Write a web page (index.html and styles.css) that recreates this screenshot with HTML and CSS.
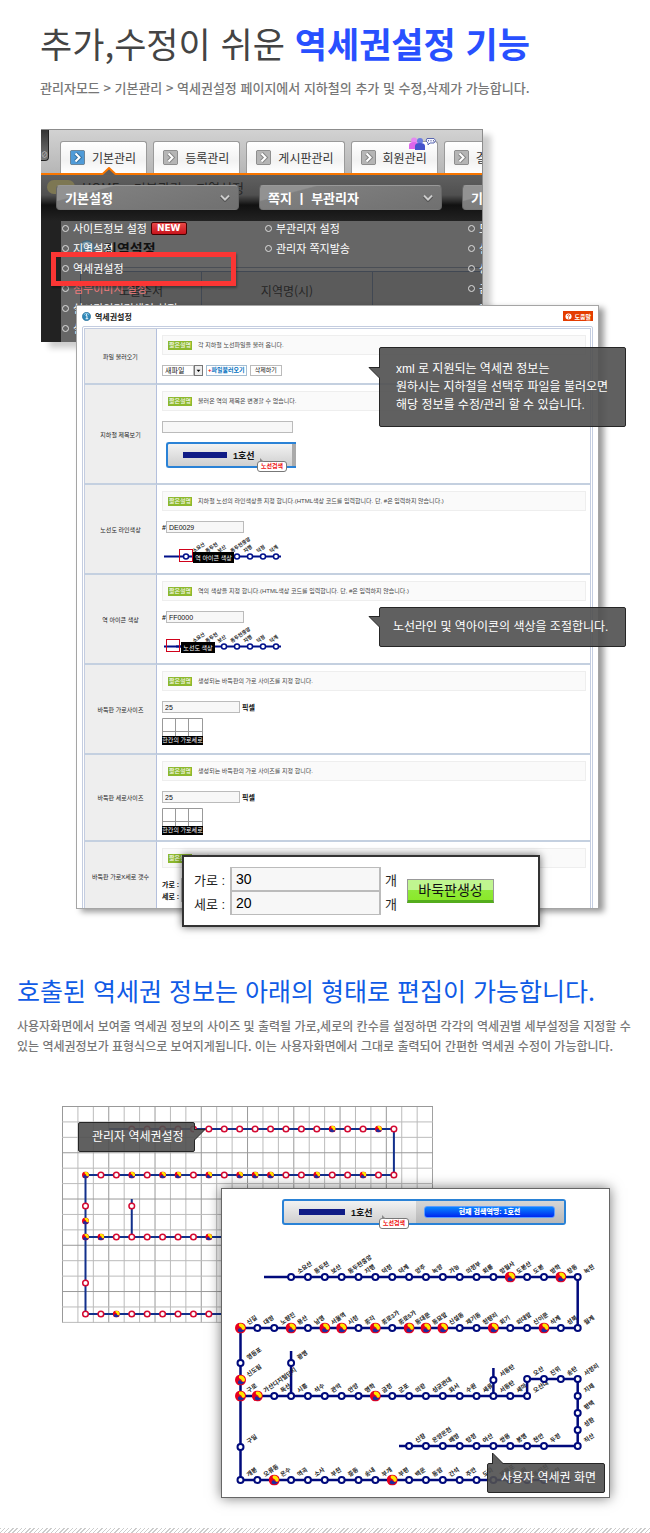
FILE: index.html
```html
<!DOCTYPE html>
<html lang="ko">
<head>
<meta charset="utf-8">
<meta name="viewport" content="width=device-width, initial-scale=1">
<title>역세권설정 기능</title>
<link rel="stylesheet" href="styles.css">
</head>
<body>
<svg class="defs" aria-hidden="true">
  <defs>
    <symbol id="swirl" viewBox="-5 -5 10 10">
      <circle r="5" fill="#e8001c"/>
      <path d="M-1 -4.6 A4.7 4.7 0 0 1 4.4 1.6 C2.6 2.6 1.2 1.6 1.2 0.2 C1.2 -1.4 -2.6 -1 -1 -4.6Z" fill="#ffe800"/>
      <path d="M4.4 1.6 A4.7 4.7 0 0 1 -3.6 3 C-3.4 0.8 -1.6 -0.4 -0.2 0.4 C1.2 1.4 1.6 3 4.4 1.6Z" fill="#1c2ca0"/>
    </symbol>
    <symbol id="transfer" viewBox="-5 -5 10 10">
      <circle r="5" fill="#e60020"/>
      <path d="M-1.2 -3.9 A4 4 0 0 1 3.9 1 C2.4 2 1.2 1.4 1.1 .2 C1 -1.2 -2.4 -.6 -1.2 -3.9Z" fill="#ffe800"/>
      <path d="M3.6 1.6 A3.9 3.9 0 0 1 -2.4 3 C-2.4 1 -1.4 0 -.2 .4 C1 1 1.4 2.4 3.6 1.6Z" fill="#1c2ca0"/>
    </symbol>
    <symbol id="tab-arrow" viewBox="0 0 15 15">
      <rect x=".5" y=".5" width="14" height="14" rx="1" fill="currentColor" stroke="#0005"/>
      <path d="M5.5 3.5 9.5 7.5 5.5 11.500" fill="none" stroke="#0004" stroke-width="4"/>
      <path d="M5.5 3.5 9.5 7.5 5.5 11.500" fill="none" stroke="#fff" stroke-width="2"/>
    </symbol>
    <symbol id="chevron" viewBox="0 0 10 8">
      <path d="M1 2 5 6 9 2" fill="none" stroke="#555" stroke-width="3.500"/>
      <path d="M1 1.500 5 5.500 9 1.500" fill="none" stroke="#ccc" stroke-width="2"/>
    </symbol>
    <symbol id="info" viewBox="0 0 10 10">
      <circle cx="5" cy="5" r="4.600" fill="#2d87b8" stroke="#1b6590" stroke-width=".6"/>
      <path d="M2 3 A4 4 0 0 1 8 3" fill="none" stroke="#9bd4ee"/>
      <path d="M4 4h1.500v3.500M4 7.500h3M5 2.300v1" fill="none" stroke="#fff"/>
    </symbol>
    <symbol id="grid-thumb" viewBox="0 0 41 18">
      <path d="M.5 18V.5H40.500V18M13.500 0V18M26.500 0V18M0 13.500H41" fill="none" stroke="#999"/>
    </symbol>
    <g id="thumb-labels" class="thumb-text">
      <text transform="translate(32 16) rotate(-35)">소요산</text>
      <text transform="translate(45 16) rotate(-35)">동두천</text>
      <text transform="translate(57 16) rotate(-35)">보산</text>
      <text transform="translate(70 16) rotate(-35)">동두천중앙</text>
      <text transform="translate(83 16) rotate(-35)">지행</text>
      <text transform="translate(96 16) rotate(-35)">덕정</text>
      <text transform="translate(109 16) rotate(-35)">덕계</text>
      <path d="M2 19.500H119" stroke="#00108a" stroke-width="2"/>
      <g fill="#fff" stroke="#00108a" stroke-width="1.500">
        <circle cx="24" cy="19.500" r="2.500"/><circle cx="49" cy="19.500" r="2.500"/><circle cx="62" cy="19.500" r="2.500"/><circle cx="75" cy="19.500" r="2.500"/><circle cx="88" cy="19.500" r="2.500"/><circle cx="101" cy="19.500" r="2.500"/><circle cx="114" cy="19.500" r="2.500"/>
      </g>
    </g>
  </defs>
</svg>

<main class="page">
  <header class="intro">
    <h1>추가,수정이 쉬운 <strong>역세권설정 기능</strong></h1>
    <p>관리자모드 &gt; 기본관리 &gt; 역세권설정 페이지에서 지하철의 추가 및 수정,삭제가 가능합니다.</p>
  </header>

  <section class="stage">
    <div class="admin">
      <nav class="tabs">
        <span class="corner">⊘</span>
        <a href="#" class="tab tab-on"><svg><use href="#tab-arrow"/></svg>기본관리</a>
        <a href="#" class="tab"><svg><use href="#tab-arrow"/></svg>등록관리</a>
        <a href="#" class="tab"><svg><use href="#tab-arrow"/></svg>게시판관리</a>
        <a href="#" class="tab"><svg><use href="#tab-arrow"/></svg>회원관리
          <svg class="people" viewBox="0 0 28 14">
            <circle cx="6" cy="3.500" r="3" fill="#e58af0"/><path d="M1 12V8Q1 5 6 5T11 8V12Z" fill="#dd66ea"/>
            <circle cx="12" cy="4" r="3" fill="#6a7ce0"/><path d="M7 13V9Q7 6 12 6T17 9V13Z" fill="#4553cc"/>
            <path d="M19 1.500H26L27.500 3.500 26 6H22L20 8V6L18 4Z" fill="#f4f6ff" stroke="#5966b0"/>
            <path d="M20 3.800h1M22.500 3.800h1M25 3.800h1" stroke="#333a80"/>
          </svg></a>
        <a href="#" class="tab"><svg><use href="#tab-arrow"/></svg>결제관리</a>
      </nav>
      <div class="admin-body">
        <div class="crumbs"><i></i>HOME &gt; 기본관리 &gt; 지역설정</div>
        <div class="dimmed">
          <h2><svg><use href="#info"/></svg>지역설정</h2>
          <div class="dim-table"><span>노출순서</span><span>지역명(시)</span><span></span></div>
        </div>
        <div class="menus">
          <div class="menu">
            <h3>기본설정<svg><use href="#chevron"/></svg></h3>
            <ul>
              <li>사이트정보 설정<b class="new">NEW</b></li><li>지역설정</li><li>역세권설정</li><li class="pink">첨부이미지 설정</li><li>실시간인기검색어 설정</li><li>실명인증 설정</li>
            </ul>
          </div>
          <div class="menu">
            <h3>쪽지 ㅣ 부관리자<svg><use href="#chevron"/></svg></h3>
            <ul><li>부관리자 설정</li><li>관리자 쪽지발송</li></ul>
          </div>
          <div class="menu">
            <h3>기타관리</h3>
            <ul><li>도메인 설정</li><li>설문 관리</li><li>상품 관리</li><li>금액 설정</li><li>기타</li></ul>
          </div>
        </div>
        <svg class="notch" viewBox="0 0 14 8"><path d="M0 8 7 1 14 8Z" fill="#5e5e5e"/><path d="M0 7.500 7 1 14 7.500" fill="none" stroke="#f97600" stroke-width="2"/></svg>
      </div>
    </div>
    <div class="highlight"></div>

    <div class="settings">
      <div class="settings-head">
        <h2><svg><use href="#info"/></svg>역세권설정</h2>
        <button class="help" type="button"><svg viewBox="0 0 8 8"><circle cx="4" cy="4" r="3.500" fill="#fff"/><path d="M2.800 3.200Q2.800 2 4 2T5.200 3.200Q5 4 4 4.300V5M4 5.600V6.500" fill="none" stroke="#e43c00"/></svg>도움말</button>
      </div>
      <table class="form">
        <tr class="r-file"><th>파일 불러오기</th><td>
          <p class="note"><b>짧은설명</b>각 지하철 노선파일을 불러 옵니다.</p>
          <div class="tools">
            <span class="pick"><select aria-label="파일"><option>새파일</option></select><svg viewBox="0 0 9 9"><path d="M2 3.500H7L4.500 6.500Z"/></svg></span>
            <button class="load" type="button"><i>+</i>파일불러오기</button>
            <button type="button">삭제하기</button>
          </div></td></tr>
        <tr class="r-title"><th><label for="title">지하철 제목보기</label></th><td>
          <p class="note"><b>짧은설명</b>불러온 역의 제목은 변경할 수 없습니다.</p>
          <input id="title" class="wide" type="text">
          <div class="line-bar small"><i class="stripe"></i>1호선<span class="end"></span><span class="bubble">노선검색</span></div></td></tr>
        <tr class="r-color"><th><label for="line">노선도 라인색상</label></th><td>
          <p class="note"><b>짧은설명</b>지하철 노선의 라인색상을 지정 합니다.(HTML색상 코드를 입력합니다. 단, #은 입력하지 않습니다.)</p>
          <div class="field"><b>#</b><input id="line" type="text" value="DE0029"></div>
          <svg class="thumb" viewBox="0 0 122 26"><use href="#thumb-labels"/><rect x="17.500" y="12.500" width="13" height="12" fill="none" stroke="#d0021b"/><rect x="31" y="15" width="41" height="11"/><text class="thumb-cap" x="51.500" y="23">역 아이콘 색상</text></svg></td></tr>
        <tr class="r-color"><th><label for="icon">역 아이콘 색상</label></th><td>
          <p class="note"><b>짧은설명</b>역의 색상을 지정 합니다.(HTML색상 코드를 입력합니다. 단, #은 입력하지 않습니다.)</p>
          <div class="field"><b>#</b><input id="icon" type="text" value="FF0000"></div>
          <svg class="thumb" viewBox="0 0 122 26"><use href="#thumb-labels"/><path d="M14 19.500H32" stroke="#00108a" stroke-width="2"/><rect x="4.500" y="12.500" width="13" height="12" fill="none" stroke="#d0021b"/><rect x="19" y="15" width="34" height="11"/><text class="thumb-cap" x="36" y="23">노선도 색상</text></svg></td></tr>
        <tr class="r-color"><th><label for="w">바둑판 가로사이즈</label></th><td>
          <p class="note"><b>짧은설명</b>생성되는 바둑판의 가로 사이즈를 지정 합니다.</p>
          <div class="field"><input id="w" type="text" value="25"><b>픽셀</b></div>
          <div class="cells"><svg><use href="#grid-thumb"/></svg><span>한칸의 가로세로</span></div></td></tr>
        <tr class="r-size"><th><label for="h">바둑판 세로사이즈</label></th><td>
          <p class="note"><b>짧은설명</b>생성되는 바둑판의 가로 사이즈를 지정 합니다.</p>
          <div class="field"><input id="h" type="text" value="25"><b>픽셀</b></div>
          <div class="cells"><svg><use href="#grid-thumb"/></svg><span>한칸의 가로세로</span></div></td></tr>
        <tr class="r-count"><th>바둑판 가로X세로 갯수</th><td>
          <p class="note"><b>짧은설명</b>생성되는 바둑판의 칸수를 지정 합니다.</p>
          <div class="field tight"><b>가로 :</b><input aria-label="가로" type="text"></div>
          <div class="field tight"><b>세로 :</b><input aria-label="세로" type="text"></div></td></tr>
      </table>
    </div>

    <p class="callout call-xml">xml 로 지원되는 역세권 정보는<br>원하시는 지하철을 선택후 파일을 불러오면<br>해당 정보를 수정/관리 할 수 있습니다.
      <svg viewBox="0 0 12 12"><path d="M12 .5H1L12 11.500" fill="#5e5e5e" stroke="#262626"/></svg></p>
    <p class="callout call-color">노선라인 및 역아이콘의 색상을 조절합니다.
      <svg viewBox="0 0 12 12"><path d="M12 .5H1L12 11.500" fill="#5e5e5e" stroke="#262626"/></svg></p>

    <form class="dialog">
      <div class="dialog-fields">
        <label for="cols">가로 :</label><input id="cols" type="text" value="30"><span>개</span>
        <label for="rows">세로 :</label><input id="rows" type="text" value="20"><span>개</span>
      </div>
      <button type="button">바둑판생성</button>
    </form>
  </section>

  <header class="second">
    <h2>호출된 역세권 정보는 아래의 형태로 편집이 가능합니다.</h2>
    <p>사용자화면에서 보여줄 역세권 정보의 사이즈 및 출력될 가로,세로의 칸수를 설정하면 각각의 역세권별 세부설정을 지정할 수<br>있는 역세권정보가 표형식으로 보여지게됩니다. 이는 사용자화면에서 그대로 출력되어 간편한 역세권 수정이 가능합니다.</p>
  </header>

  <section class="stage maps">
    <svg id="edit-map" class="edit-map" viewBox="0 0 371 217" role="img" aria-label="관리자 노선도"></svg>
    <div class="viewer">
      <div class="line-bar"><i class="stripe"></i>1호선<span class="bubble">노선검색</span><span class="end"><b>현재 검색역명: 1호선</b></span></div>
      <svg id="user-map" class="user-map" viewBox="0 0 387 272" role="img" aria-label="사용자 노선도"></svg>
    </div>
    <p class="callout call-admin">관리자 역세권설정
      <svg viewBox="0 0 12 12"><path d="M0 .5H11L0 11.500" fill="#5e5e5e" stroke="#262626"/></svg></p>
    <p class="callout call-user">사용자 역세권 화면
      <svg viewBox="0 0 12 12"><path d="M.5 12V1L11.500 12" fill="#5e5e5e" stroke="#262626"/></svg></p>
  </section>
  <footer class="hatch"></footer>
</main>
<script src="map.js"></script>
</body>
</html>
```

FILE: styles.css
```css
* { box-sizing: border-box; }
body {
  margin: 0;
  background: #fff;
  color: #222;
  font-family: "Liberation Sans", "Noto Sans CJK KR", sans-serif;
}
h1, h2, h3, p, ul { margin: 0; padding: 0; font-weight: 400; }
ul { list-style: none; }
i { font-style: normal; }
a { color: inherit; text-decoration: none; }
input, select, button {
  margin: 0; padding: 0; border: 1px solid #bbb; border-radius: 0;
  background: #f7f7f7; color: #111; font: inherit; appearance: none;
}
.defs { position: absolute; width: 0; height: 0; }
.page { display: flex; flex-direction: column; }

.intro { padding: 18px 24px 0 40px; font-family: "Noto Sans CJK KR", sans-serif; }
.intro h1 { font-size: 35px; line-height: 50px; color: #444; white-space: nowrap; }
.intro h1 strong { color: #2850ff; font-weight: 700; }
.intro p { margin-top: 10px; font-size: 13px; line-height: 20px; font-weight: 500; color: #777; white-space: nowrap; }

.stage { position: relative; margin: 31px 24px 0 41px; }

/* admin screen */
.admin {
  height: 213px; margin-right: 143px; overflow: hidden;
  border: 1px solid #8c8c8c; border-width: 1px 1px 0 0;
  background: #666; box-shadow: 8px 6px 6px #0003;
  font-family: "Noto Sans CJK KR", sans-serif;
}
.tabs {
  display: flex; align-items: flex-end; gap: 6px; height: 45px;
  border-bottom: 2px solid #f97600;
  background: linear-gradient(#d2d2d2, #b6b6b6);
}
.corner {
  align-self: flex-start; width: 10px; height: 31px; margin-right: 5px; padding-top: 18px;
  border-radius: 0 0 4px; border: 1px solid #222; border-width: 0 1px 1px 0;
  background: linear-gradient(#333, #777); color: #ccc; font-size: 7px; line-height: 12px;
}
.tab {
  position: relative; display: flex; flex: none; align-items: center; gap: 7px; height: 32px; padding: 0 10px 0 9px;
  border: 1px solid #9a9a9a; border-bottom: 0; border-radius: 3px 3px 0 0;
  background: linear-gradient(#fff, #f2f2f2 60%, #fff);
  font-size: 12px; color: #333; white-space: nowrap;
}
.tab svg { flex: none; width: 15px; height: 15px; color: #b5b5b5; }
.tab-on svg { color: #4f9bd8; }
.tab .people { position: absolute; right: 1px; top: -5px; width: 28px; height: 14px; }
.admin-body { position: relative; }
.notch { position: absolute; left: 61px; top: -8px; width: 14px; height: 8px; }
.crumbs {
  display: flex; align-items: center; gap: 7px; height: 46px; padding: 0 0 22px 6px;
  background: linear-gradient(#606060, #505050 20px, #2c2c2c 26px, #111 30px, #222);
  font-size: 13px; color: #262626; white-space: nowrap;
}
.crumbs i { width: 28px; height: 14px; border-radius: 7px; background: #7d7753; }
.dimmed { height: 130px; padding-left: 19px; border-left: 20px solid #222; background: #666; }
.dimmed h2 { display: flex; align-items: center; gap: 9px; height: 47px; padding: 8px 0 0; font-size: 14px; line-height: 20px; font-weight: 700; color: #111; border-bottom: 1px solid #4a4e55; }
.dimmed h2 svg { width: 16px; height: 16px; margin-left: -1px; opacity: .5; }
.dim-table { display: flex; height: 80px; margin-top: 3px; border: 1px solid #414853; border-right: 0; background: #5b5b5b; font-size: 12px; color: #262626; }
.dim-table span { flex: none; width: 171px; height: 80px; padding-top: 10px; border-right: 1px solid #414853; text-align: center; }
.dim-table span:first-child { width: 121px; }
.menus { position: absolute; top: 10px; left: 15px; display: flex; gap: 20px; }
.menu { flex: none; width: 183px; color: #fff; font-size: 11px; }
.menu h3 {
  display: flex; align-items: center; justify-content: space-between; height: 25px; padding: 0 8px;
  border: 1px solid #999; border-color: #999 #666 #777; border-radius: 4px;
  background: linear-gradient(165deg, #929292 20%, #7f7f7f 22%, #707070);
  font-size: 13px; font-weight: 700;
}
.menu h3 svg { width: 10px; height: 8px; }
.menu ul { padding: 8px 0 0 6px; }
.menu li { display: flex; align-items: center; gap: 4px; height: 20px; white-space: nowrap; }
.menu li::before { content: ""; width: 5px; height: 5px; border: 1px solid #ddd; border-radius: 50%; }
.menu .pink { color: #f27c7c; }
.new { height: 13px; padding: 0 5px; border: 1px solid #400; border-radius: 2px; background: linear-gradient(#e84848, #c8141c); font: 700 9px/11px "DejaVu Sans", sans-serif; }
.highlight { position: absolute; left: 10px; top: 123px; width: 185px; height: 34px; border: 5px solid #fb3634; box-shadow: 1px 2px 2px #0005; }

/* settings window */
.settings {
  position: relative; height: 604px; margin: -37px 27px 0 35px; padding: 0 5px; overflow: hidden;
  border: 1px solid #a5a5a5; background: #fff; box-shadow: 5px 3px 6px #0006;
  font-size: 6px;
}
.settings-head { display: flex; align-items: center; justify-content: space-between; height: 20px; }
.settings h2 { display: flex; align-items: center; gap: 4px; font-size: 8px; font-weight: 700; }
.settings h2 svg { width: 9px; height: 9px; }
.help { display: flex; align-items: center; gap: 2px; height: 10px; padding: 0 2px; border: 0; background: #e43c00; color: #fff; font-weight: 700; }
.help svg { width: 7px; height: 7px; }
.form { width: 100%; border: 3px double #c4cde0; border-radius: 2px; border-collapse: separate; border-spacing: 0; }
.form th, .form td { padding: 0; border-bottom: 2px solid #c4d0e0; }
.form th { width: 72px; border-right: 1px solid #b4c0dc; background: #eee; font-weight: 400; text-align: center; }
.form td { padding: 6px 4px 0 5px; vertical-align: top; }
.r-file { height: 56px; }
.r-title { height: 100px; }
.r-color { height: 90px; }
.r-size { height: 87px; }
.r-count { height: 70px; }
.note { display: flex; align-items: center; gap: 6px; height: 20px; margin-bottom: 10px; padding-left: 5px; border: 1px solid #eee; background: #fafafa; line-height: 9px; color: #444; white-space: nowrap; }
.note b { padding: 0 1px; background: #8db92e; color: #fff; font-weight: 400; }
.tools { display: flex; gap: 3px; }
.tools button { height: 11px; padding: 0 4px; background: #fff; line-height: 9px; }
.tools .load { padding: 0 1px; border-color: #a5bed2; color: #0070c0; font-weight: 700; }
.load i { color: #e00; }
.pick { display: flex; height: 11px; }
.pick select { width: 32px; padding-left: 2px; font-size: 7px; line-height: 9px; background: #fff; }
.pick svg { width: 9px; height: 11px; border: 1px solid #777; background: #eee; }
.settings input { display: block; width: 78px; height: 12px; padding-left: 2px; font-size: 7px; line-height: 10px; }
.settings .wide { width: 131px; }
.field { display: flex; align-items: center; gap: 2px; height: 12px; font-size: 7px; }
.field b { color: #111; }
.field b:first-child { margin-right: -2px; font-size: 7px; }
.tight b:first-child { margin-right: 0; }
.thumb { display: block; width: 122px; height: 26px; margin-top: 4px; overflow: visible; }
.thumb-text text { font-size: 5px; font-weight: 700; fill: #222; }
.thumb-cap { font-size: 6px; fill: #fff; text-anchor: middle; }
.cells { width: 41px; margin-top: 5px; }
.cells svg { display: block; width: 41px; height: 18px; }
.cells span { display: flex; justify-content: center; background: #000; color: #fff; font-size: 6px; line-height: 9px; white-space: nowrap; }

/* metro line header */
.line-bar {
  position: relative; display: flex; align-items: center; gap: 6px; height: 26px; padding-left: 15px;
  border: 2px solid #2a82d6; border-radius: 3px; background: linear-gradient(#f2f2f2, #cfcfcf);
  font-size: 9px; font-weight: 700; color: #111;
}
.line-bar.small { width: 130px; margin: 9px 0 0 4px; border-right: 0; border-radius: 3px 0 0 3px; }
.small .end { width: 4px; height: 22px; margin-left: auto; background: #aaa; }
.stripe { width: 46px; height: 6px; background: #101c86; }
.bubble { position: absolute; left: 95px; top: 17px; padding: 0 3px; border: 1px solid #777; border-radius: 3px; background: #fff; color: #f01010; font-size: 6px; line-height: 9px; }
.bubble::before { content: ""; position: absolute; left: 2px; top: -4px; border: solid transparent; border-width: 0 4px 4px 0; border-bottom-color: #888; }
.small .bubble { left: 89px; }
.small .stripe { width: 44px; }

/* callouts */
.callout { position: absolute; border: 1px solid #262626; border-radius: 2px; background: #505050e8; color: #fff; font-size: 12px; line-height: 18px; white-space: nowrap; }
.callout svg { position: absolute; width: 12px; height: 12px; }
.call-xml { right: 0; top: 218px; width: 247px; padding: 12px 16px; }
.call-color { right: 0; top: 478px; width: 247px; padding: 10px 13px; }
.call-xml svg, .call-color svg { left: -12px; top: 19px; }
.call-color svg { top: 8px; }
.call-admin { left: 16px; top: 16px; padding: 5px 10px 5px 13px; }
.call-admin svg { left: 100%; top: 6px; }
.call-user { right: 5px; bottom: 5px; padding: 5px 8px 5px 13px; }
.call-user svg { left: 4px; top: -12px; }

/* size dialog */
.dialog {
  position: absolute; left: 141px; right: 86px; bottom: -18px; display: flex; align-items: center; gap: 10px;
  height: 72px; padding: 0 10px; border: 2px solid #333; background: #fff; box-shadow: 0 0 8px #0009;
  font-size: 13px;
}
.dialog-fields { display: grid; grid-template-columns: 36px 151px 12px; align-items: center; }
.dialog-fields span { padding-left: 4px; }
.dialog-fields input { height: 24px; padding-left: 4px; border: 1px solid #bbb; border-width: 1px 2px; font-size: 14px; color: #000; }
.dialog button { width: 87px; height: 24px; margin-left: 4px; border: 1px solid #999; border-bottom: 3px solid #54ad1c; background: linear-gradient(#c0f590 48%, #90ea3a 50%, #8be82a); font-size: 14px; line-height: 16px; }

.second { padding: 61px 16px 0 17px; font-family: "Noto Sans CJK KR", sans-serif; }
.second h2 { font-size: 25px; line-height: 40px; color: #0f5be6; white-space: nowrap; }
.second p { margin-top: 6px; font-size: 12px; line-height: 20px; font-weight: 500; color: #777; word-break: keep-all; }

/* maps */
.maps { margin: 50px 40px 0 62px; }
.edit-map { display: block; width: 371px; height: 217px; }
.viewer { position: relative; margin: -135px 0 0 159px; padding-top: 10px; border: 1px solid #666; background: #fff; box-shadow: 0 0 12px #0008; }
.viewer .line-bar { margin: 0 43px 0 60px; }
.end b { display: block; width: 131px; margin: 5px 8px; border: 1px solid #5b9bff; border-radius: 3px; background: linear-gradient(#0a86ff, #0028f0); color: #fff; font-size: 7px; line-height: 10px; text-align: center; }
.viewer .end { width: 148px; height: 22px; margin-left: auto; background: linear-gradient(#d6d6d6, #b8b8b8); }
.user-map { display: block; width: 100%; }
.user-map text { font-size: 6px; font-weight: 700; fill: #222; }

.hatch { height: 5px; margin-top: 30px; background: repeating-linear-gradient(135deg, #ccc 0 1px, #fff 1px 3px); }
```

FILE: map.js
```javascript
const NS = 'http://www.w3.org/2000/svg';

function add(parent, tag, attrs, text) {
  const el = document.createElementNS(NS, tag);
  for (const key in attrs) el.setAttribute(key, attrs[key]);
  if (text) el.textContent = text;
  parent.appendChild(el);
}

// Editor map: square cells with the line laid over them.
const edit = document.getElementById('edit-map');
const cell = 15.42;
for (let i = 0; i <= 24; i++) add(edit, 'path', { d: `M${i * cell + 0.5} 0V217`, stroke: i % 3 ? '#bbb' : '#999' });
for (let i = 0; i <= 14; i++) add(edit, 'path', { d: `M0 ${i * cell + 0.5}H371`, stroke: i % 3 ? '#bbb' : '#999' });
const ex = c => 23.5 + c * cell;
add(edit, 'path', {
  d: `M47 23H${ex(20)}V69H${ex(0)}V208H170M${ex(0)} 131H170M${ex(3)} 93V131`,
  fill: 'none', stroke: '#12308c', 'stroke-width': 2
});
function editStation(c, y, transfer) {
  if (transfer) add(edit, 'use', { href: '#swirl', x: ex(c) - 3.5, y: y - 3.5, width: 7, height: 7 });
  else add(edit, 'circle', { cx: ex(c), cy: y, r: 2.8, fill: '#fff', stroke: '#d40a32', 'stroke-width': 1.5 });
}
function editRow(from, to, y, transfers) {
  for (let c = from; c <= to; c++) editStation(c, y, transfers.includes(c));
}
editRow(3, 20, 23, [16, 19]);
editRow(0, 20, 69, [0, 3, 5, 6, 8, 10, 11, 12, 15, 18]);
editRow(0, 8, 131, [0, 1, 8]);
editRow(0, 8, 208, [2]);
editStation(0, 100, false);
editStation(0, 115, true);
editStation(0, 177, false);
editStation(3, 100, false);

// Visitor map: named stations.
const user = document.getElementById('user-map');
const ux = c => 18.5 + c * 16.86;
add(user, 'path', {
  d: `M42 52H${ux(20)}V103H${ux(0)}V255H349M${ux(0)} 171H${ux(17)}V154H${ux(20)}V221H177M${ux(3)} 126V171M${ux(15)} 143V171`,
  fill: 'none', stroke: '#000a7c', 'stroke-width': 2.5
});
function userStation(c, y, name, transfer) {
  if (transfer) add(user, 'use', { href: '#transfer', x: ux(c) - 5.5, y: y - 5.5, width: 11, height: 11 });
  else add(user, 'circle', { cx: ux(c), cy: y, r: 3, fill: '#fff', stroke: '#000a7c', 'stroke-width': 2 });
  add(user, 'text', { transform: `translate(${ux(c) + 8} ${y - 3}) rotate(-35)` }, name);
}
function userRow(from, y, names, transfers = []) {
  names.split(' ').forEach((name, i) => userStation(from + i, y, name, transfers.includes(from + i)));
}
userRow(3, 52, '소요산 동두천 보산 동두천중앙 지행 덕정 덕계 양주 녹양 가능 의정부 회룡 망월사 도봉산 도봉 방학 창동 녹천', [16, 19]);
userRow(0, 103, '신길 대방 노량진 용산 남영 서울역 시청 종각 종로3가 종로5가 동대문 동묘앞 신설동 제기동 청량리 회기 외대앞 신이문 석계 성북 월계', [0, 3, 5, 6, 8, 10, 11, 12, 15, 18]);
userRow(0, 171, '구로 가산디지털단지 독산 시흥 석수 관악 안양 명학 금정 군포 의왕 성균관대 화서 수원 세류 서동탄 세마 오산대', [0, 1, 8]);
userRow(17, 154, '오산 진위 송탄 서정리');
userRow(10, 221, '신창 온양온천 배방 탕정 아산 쌍용 봉명 천안 두정');
userRow(0, 255, '개봉 오류동 온수 역곡 소사 부천 중동 송내 부개 부평 백운 동암 간석 주안 도화 제물포 도원 동인천 인천', [2, 9]);
userStation(0, 138, '영등포', false);
userStation(0, 155, '신도림', true);
userStation(0, 222, '구일', false);
userStation(3, 138, '광명', false);
userStation(15, 155, '서동탄', false);
userStation(20, 171, '지제', false);
userStation(20, 188, '평택', false);
userStation(20, 205, '성환', false);
userStation(20, 221, '직산', false);
```
